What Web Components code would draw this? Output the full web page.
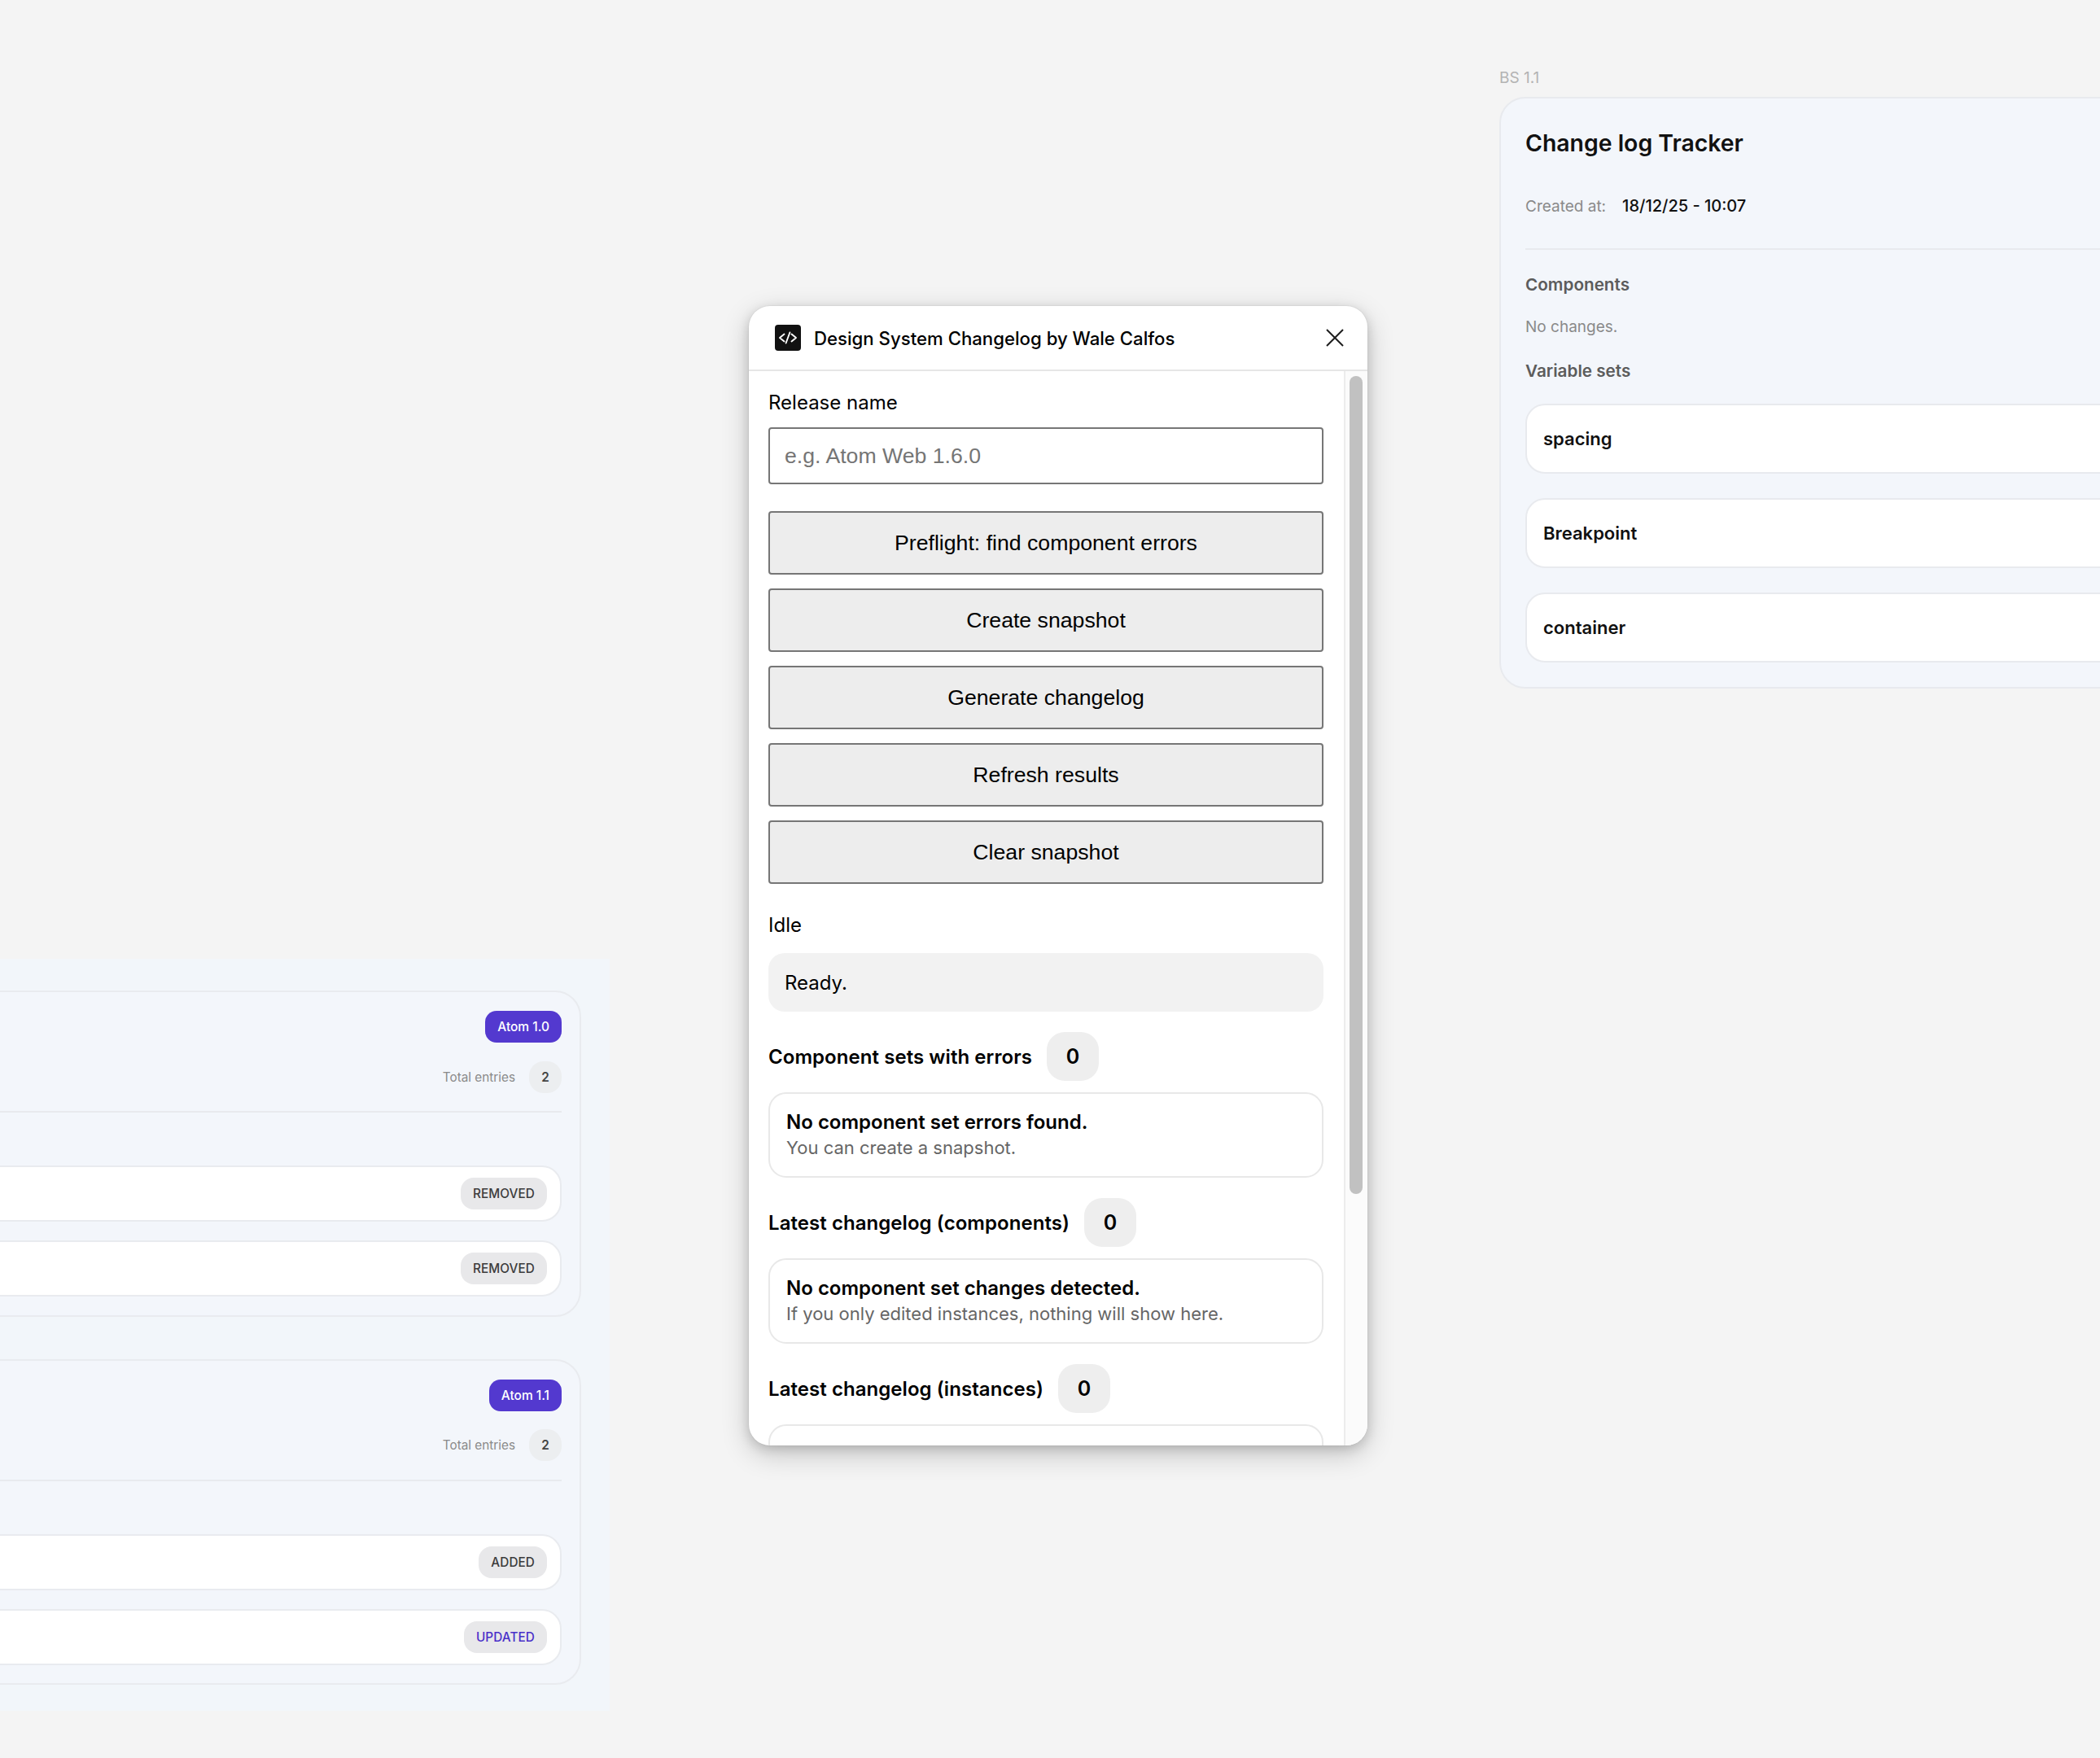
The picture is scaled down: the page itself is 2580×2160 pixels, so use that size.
<!DOCTYPE html>
<html lang="en">
<head>
<meta charset="UTF-8">
<title>Design System Changelog</title>
<style>
  html, body { margin: 0; height: 100%; }
  body { width: 2580px; height: 2160px; overflow: hidden; background: #f4f4f4; font-family: Inter, "Liberation Sans", sans-serif; }
</style>
</head>
<body>
  <figma-canvas>
    <release-frame style="left:-300px; top:1178px;">
      <release-card tag="Atom 1.0">
        <change-row kind="removed"></change-row>
        <change-row kind="removed"></change-row>
      </release-card>
      <release-card tag="Atom 1.1">
        <change-row kind="added"></change-row>
        <change-row kind="updated"></change-row>
      </release-card>
    </release-frame>

    <tracker-card style="left:1842px; top:84px;" label="BS 1.1" created="18/12/25 - 10:07">
      <tracker-row>spacing</tracker-row>
      <tracker-row>Breakpoint</tracker-row>
      <tracker-row>container</tracker-row>
    </tracker-card>

    <plugin-window style="left:920px; top:376px;" title="Design System Changelog by Wale Calfos">
      <field-label>Release name</field-label>
      <name-input placeholder="e.g. Atom Web 1.6.0"></name-input>
      <action-list>
        <action-button>Preflight: find component errors</action-button>
        <action-button>Create snapshot</action-button>
        <action-button>Generate changelog</action-button>
        <action-button>Refresh results</action-button>
        <action-button>Clear snapshot</action-button>
      </action-list>
      <status-box state="Idle">Ready.</status-box>
      <result-section heading="Component sets with errors" count="0" title="No component set errors found." note="You can create a snapshot."></result-section>
      <result-section heading="Latest changelog (components)" count="0" title="No component set changes detected." note="If you only edited instances, nothing will show here."></result-section>
      <result-section heading="Latest changelog (instances)" count="0" title="No instance changes detected."></result-section>
    </plugin-window>
  </figma-canvas>

<script>
  function define(name, css, html) {
    class El extends HTMLElement {
      constructor() {
        super();
        const root = this.attachShadow({ mode: 'open' });
        root.innerHTML = `<style>${css}</style>` + html(this);
      }
    }
    customElements.define(name, El);
  }
  const attr = (el, n) => el.getAttribute(n) || '';

  define('figma-canvas', `
    :host { display: block; position: relative; width: 2580px; height: 2160px; overflow: hidden; }
  `, () => `<slot></slot>`);

  // plugin window
  define('plugin-window', `
    :host { position: absolute; display: flex; flex-direction: column; width: 760px; height: 1400px; background: #fff;
      border-radius: 26px; overflow: hidden; color: #000; font-family: Inter, "Liberation Sans", sans-serif;
      box-shadow: 0 0 0 1px rgba(0,0,0,.03), 0 4px 14px rgba(0,0,0,.15), 0 10px 34px rgba(0,0,0,.2); }
    header { flex: none; display: flex; align-items: center; box-sizing: border-box; height: 80px; padding: 0 28px 0 32px; border-bottom: 2px solid #e6e6e6; }
    .logo { flex: none; width: 32px; height: 32px; margin-right: 16px; display: block; }
    h1 { flex: 1; margin: 0; padding-top: 2px; font-size: 22.2px; font-weight: 500; line-height: 32px; white-space: nowrap; }
    .close { flex: none; display: block; width: 24px; height: 24px; }
    .body { flex: 1; min-height: 0; display: flex; }
    .content { flex: 1; min-width: 0; overflow: hidden; padding: 23px 25px 0 24px; }
    .rail { flex: none; box-sizing: border-box; width: 29px; border-left: 2px solid #ececec; background: #fbfbfb; padding: 6px 0 0 5px; }
    .thumb { width: 16px; height: 1005px; background: #c1c1c1; border-radius: 8px; }
  `, el => `
    <header>
      <svg class="logo" viewBox="0 0 32 32" aria-hidden="true">
        <rect width="32" height="32" rx="4" fill="#111"/>
        <path d="M11.5 11.5 L6 16 L11.5 20.5 M20.5 11.5 L26 16 L20.5 20.5 M18.4 9.5 L13.6 22.5" fill="none" stroke="#fff" stroke-width="1.9" stroke-linecap="round" stroke-linejoin="round"/>
      </svg>
      <h1>${attr(el, 'title')}</h1>
      <svg class="close" viewBox="0 0 24 24" aria-hidden="true">
        <path d="M2 2 L22 22 M22 2 L2 22" fill="none" stroke="#1e1e1e" stroke-width="2"/>
      </svg>
    </header>
    <div class="body">
      <div class="content"><slot></slot></div>
      <div class="rail"><div class="thumb"></div></div>
    </div>`);

  define('field-label', `
    :host { display: block; font-size: 24px; line-height: 32px; margin-bottom: 14px; color: #000; }
  `, () => `<slot></slot>`);

  define('name-input', `
    :host { display: block; }
    .box { box-sizing: border-box; height: 70px; border: 2px solid #767676; border-radius: 4px; background: #fff;
      padding: 0 18px; display: flex; align-items: center; font: 26.67px "Liberation Sans", Arial, sans-serif; color: #757575; }
  `, el => `<div class="box">${attr(el, 'placeholder')}</div>`);

  define('action-list', `
    :host { display: flex; flex-direction: column; gap: 17px; margin-top: 33px; }
  `, () => `<slot></slot>`);

  define('action-button', `
    :host { display: flex; align-items: center; justify-content: center; box-sizing: border-box; height: 78px;
      background: #ededed; border: 2px solid #767676; border-radius: 4px; font: 26.67px "Liberation Sans", Arial, sans-serif; color: #000; }
  `, () => `<slot></slot>`);

  define('status-box', `
    :host { display: block; margin-top: 35px; }
    .state { font-size: 24px; line-height: 32px; color: #000; }
    .box { box-sizing: border-box; height: 72px; margin-top: 18px; padding: 0 20px; display: flex; align-items: center;
      background: #f2f2f2; border-radius: 20px; font-size: 24px; color: #000; }
  `, el => `<div class="state">${attr(el, 'state')}</div><div class="box"><slot></slot></div>`);

  define('result-section', `
    :host { display: block; margin-top: 25px; }
    .head { display: flex; align-items: center; gap: 18px; height: 60px; }
    h2 { margin: 0; font-size: 24px; font-weight: 600; letter-spacing: .06px; color: #000; white-space: nowrap; }
    .count { flex: none; width: 64px; height: 60px; display: flex; align-items: center; justify-content: center;
      background: #eee; border-radius: 22px; font-size: 25px; font-weight: 600; }
    .card { box-sizing: border-box; height: 105px; margin-top: 14px; padding: 18.5px 20px 0; border: 2px solid #e8e8e8; border-radius: 22px; }
    .t { font-size: 24px; line-height: 32px; font-weight: 600; color: #000; white-space: nowrap; }
    .n { font-size: 22px; line-height: 32px; margin-top: -.5px; color: #666; white-space: nowrap; }
  `, el => `
    <div class="head"><h2>${attr(el, 'heading')}</h2><div class="count">${attr(el, 'count')}</div></div>
    <div class="card"><div class="t">${attr(el, 'title')}</div>${el.hasAttribute('note') ? `<div class="n">${attr(el, 'note')}</div>` : ''}</div>`);

  // tracker card on the right of the canvas
  define('tracker-card', `
    :host { position: absolute; display: block; width: 1000px; font-family: Inter, "Liberation Sans", sans-serif; }
    .label { font-size: 19px; line-height: 24px; color: #b3b3b3; margin-bottom: 11px; }
    .card { box-sizing: border-box; height: 727px; padding: 31px 30px 0; background: #f3f6fb; border: 2px solid #e8eaee; border-radius: 32px; }
    h1 { margin: 0; font-size: 28.4px; line-height: 48px; font-weight: 600; color: #111; }
    .meta { display: flex; align-items: baseline; gap: 20px; margin-top: 40px; font-size: 19px; line-height: 26px; color: #8a8a8a; }
    .meta b { font-size: 20px; font-weight: 500; color: #111; }
    hr { height: 2px; border: 0; background: #e8eaee; margin: 38px 0 0; }
    h2 { margin: 29px 0 0; font-size: 20.7px; line-height: 28px; font-weight: 600; color: #5c5c5c; }
    .none { margin-top: 25px; font-size: 19px; line-height: 26px; color: #8a8a8a; }
    h2.vars { margin-top: 27px; }
    .rows { display: flex; flex-direction: column; gap: 30px; margin-top: 26px; }
  `, el => `
    <div class="label">${attr(el, 'label')}</div>
    <div class="card">
      <h1>Change log Tracker</h1>
      <div class="meta"><span>Created at:</span><b>${attr(el, 'created')}</b></div>
      <hr>
      <h2>Components</h2>
      <div class="none">No changes.</div>
      <h2 class="vars">Variable sets</h2>
      <div class="rows"><slot></slot></div>
    </div>`);

  define('tracker-row', `
    :host { display: flex; align-items: center; box-sizing: border-box; height: 86px; padding: 0 20px; background: #fff;
      border: 2px solid #e8eaee; border-radius: 24px; font-size: 22px; font-weight: 600; color: #111; }
  `, () => `<slot></slot>`);

  // release frame on the left of the canvas
  define('release-frame', `
    :host { position: absolute; display: flex; flex-direction: column; gap: 52px; box-sizing: border-box; width: 1049px; height: 924px;
      padding: 39px 35px 0 0; background: #f2f6fa; font-family: Inter, "Liberation Sans", sans-serif; }
  `, () => `<slot></slot>`);

  define('release-card', `
    :host { display: block; box-sizing: border-box; height: 400.6px; padding: 23px 22px 0 0; background: #f3f6fb;
      border: 2px solid #e9ebef; border-radius: 32px; }
    .tag-line { display: flex; justify-content: flex-end; }
    .tag { box-sizing: border-box; height: 39px; padding: 0 15px; display: flex; align-items: center; background: #5339cf;
      border-radius: 14px; color: #fff; font-size: 15.5px; font-weight: 500; }
    .total { display: flex; justify-content: flex-end; align-items: center; gap: 17px; margin-top: 22.5px; font-size: 15.3px; color: #8a8a8a; }
    .total b { width: 40px; height: 39px; display: flex; align-items: center; justify-content: center; background: #eceef0;
      border-radius: 18px; color: #444; font-weight: 600; }
    hr { height: 2px; border: 0; background: #e8eaee; margin: 22.5px 0 0; }
    .rows { display: flex; flex-direction: column; gap: 23px; margin-top: 65px; }
  `, el => `
    <div class="tag-line"><div class="tag">${attr(el, 'tag')}</div></div>
    <div class="total"><span>Total entries</span><b>2</b></div>
    <hr>
    <div class="rows"><slot></slot></div>`);

  define('change-row', `
    :host { display: flex; align-items: center; justify-content: flex-end; box-sizing: border-box; height: 69px; padding-right: 16px;
      background: #fff; border: 2px solid #e9ebef; border-radius: 24px; }
    .pill { box-sizing: border-box; height: 39px; padding: 0 15px; display: flex; align-items: center; background: #e8e8ea;
      border-radius: 16px; font-size: 15.3px; font-weight: 500; letter-spacing: .1px; color: #3c3c3c; text-transform: uppercase; }
    .updated { color: #4a30c9; }
  `, el => `<div class="pill ${attr(el, 'kind')}">${attr(el, 'kind')}</div>`);
</script>
</body>
</html>
